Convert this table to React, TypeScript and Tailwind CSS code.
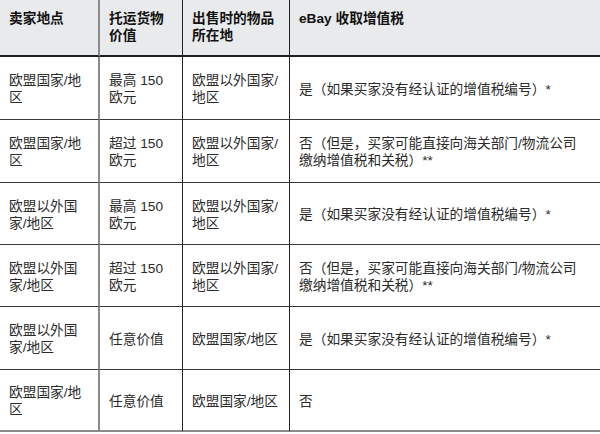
const font = { fontFamily: '"Liberation Sans", "Noto Sans CJK SC", sans-serif' };

type Row = [string, string, string, string];

const rows: Row[] = [
  ["欧盟国家/地区", "最高 150 欧元", "欧盟以外国家/地区", "是（如果买家没有经认证的增值税编号）*"],
  ["欧盟国家/地区", "超过 150 欧元", "欧盟以外国家/地区", "否（但是，买家可能直接向海关部门/物流公司缴纳增值税和关税）**"],
  ["欧盟以外国家/地区", "最高 150 欧元", "欧盟以外国家/地区", "是（如果买家没有经认证的增值税编号）*"],
  ["欧盟以外国家/地区", "超过 150 欧元", "欧盟以外国家/地区", "否（但是，买家可能直接向海关部门/物流公司缴纳增值税和关税）**"],
  ["欧盟以外国家/地区", "任意价值", "欧盟国家/地区", "是（如果买家没有经认证的增值税编号）*"],
  ["欧盟国家/地区", "任意价值", "欧盟国家/地区", "否"],
];

const heads = ["卖家地点", "托运货物价值", "出售时的物品所在地", "eBay 收取增值税"];

// column separators: first one is a wider grey rule, the rest thin black
const colBorder = ["border-r-2 border-r-[#8a8a8a]", "border-r border-r-[#222]", "border-r border-r-[#222]", ""];
// right padding per column, tuned so the cells wrap where the source does
const padR = ["pr-[12px]", "pr-[12px]", "pr-[9px]", "pr-[20px]"];

export default function App() {
  return (
    <div className="w-[600px] h-[434px] bg-white" style={font}>
      <div className="grid grid-cols-[100px_83px_107px_1fr] grid-rows-[57px_63px_63px_62px_62px_63px_62px] text-[13.7px] leading-[17px]">
        {heads.map((h, i) => (
          <div
            key={h}
            className={`bg-[#e9eaec] border-b-2 border-b-[#1e1e1e] pl-[9px] pt-[10px] font-bold text-[#111] ${padR[i]} ${colBorder[i]}`}
          >
            {h}
          </div>
        ))}
        {rows.map((r, ri) =>
          r.map((c, ci) => (
            <div
              key={`${ri}-${ci}`}
              className={`flex items-center border-b border-b-[#3a3a3a] pl-[9px] pt-[2px] text-[#2b2b2b] ${padR[ci]} ${colBorder[ci]} ${ri === rows.length - 1 ? "border-b-2 border-b-[#8a8a8a]" : ""}`}
            >
              <span>{c}</span>
            </div>
          ))
        )}
      </div>
    </div>
  );
}
